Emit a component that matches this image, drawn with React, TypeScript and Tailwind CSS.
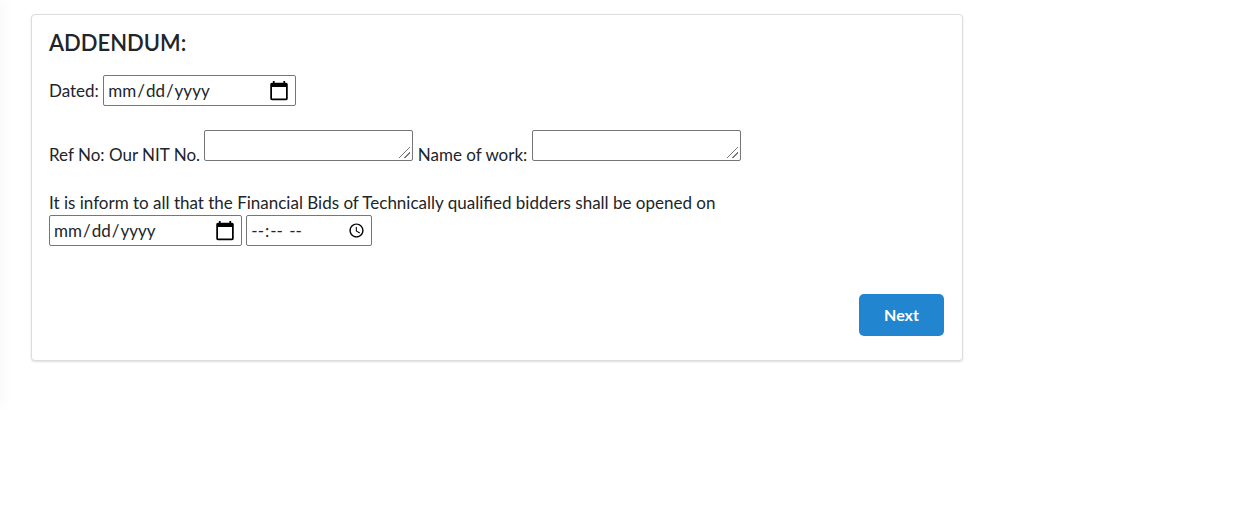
const field =
  "rounded-[2px] border border-[#767676] bg-white px-[3px] text-[17px] leading-[27px] h-[31px] text-[#212529] align-baseline";
const dateField =
  "[&::-webkit-calendar-picker-indicator]:h-[22px] [&::-webkit-calendar-picker-indicator]:w-[22px]";
const areaField =
  "w-[209px] resize [&::-webkit-resizer]:bg-[linear-gradient(135deg,transparent_46%,#777_46%,#777_52%,transparent_52%,transparent_72%,#777_72%,#777_78%,transparent_78%)] [&::-webkit-resizer]:bg-[length:11px_11px] [&::-webkit-resizer]:bg-[position:2px_2px] [&::-webkit-resizer]:bg-no-repeat";

export default function App() {
  return (
    <div className="relative flex min-h-screen items-start overflow-hidden bg-white font-['Lato',sans-serif] text-[17px] leading-[28px] text-[#212529]">
      <aside className="-ml-px h-[406px] w-px shadow-[0_0_12px_rgba(0,0,0,0.25)]" />
      <main className="mt-3.5 ml-[31px] w-[932px] max-w-full">
        <section className="rounded border border-[#dcdddd] bg-white pt-3 pr-[18px] pb-6 pl-[17px] shadow-[0_1px_2px_rgba(34,36,38,0.15)]">
          <h1 className="text-[22px] leading-8 font-semibold">ADDENDUM:</h1>
          <form>
            <div className="mt-4">
              <label htmlFor="dated">Dated:</label>{" "}
              <input id="dated" type="date" className={`${field} ${dateField} w-[193px]`} />
            </div>
            <div className="mt-6">
              <label htmlFor="ref">Ref No: Our NIT No.</label>{" "}
              <textarea id="ref" rows={1} className={`${field} ${areaField}`} />{" "}
              <label htmlFor="work">Name of work:</label>{" "}
              <textarea id="work" rows={1} className={`${field} ${areaField}`} />
            </div>
            <div className="mt-[22px]">
              <p className="leading-6">
                It is inform to all that the Financial Bids of Technically qualified bidders shall be opened on
              </p>
              <input aria-label="Opening date" type="date" className={`${field} ${dateField} w-[193px]`} />{" "}
              <input aria-label="Opening time" type="time" className={`${field} w-[126px]`} />
            </div>
            <div className="mt-12 flex justify-end">
              <button type="button" className="h-[42px] w-[85px] rounded-[5px] bg-[#2185d0] text-base font-bold text-white">
                Next
              </button>
            </div>
          </form>
        </section>
      </main>
    </div>
  );
}
